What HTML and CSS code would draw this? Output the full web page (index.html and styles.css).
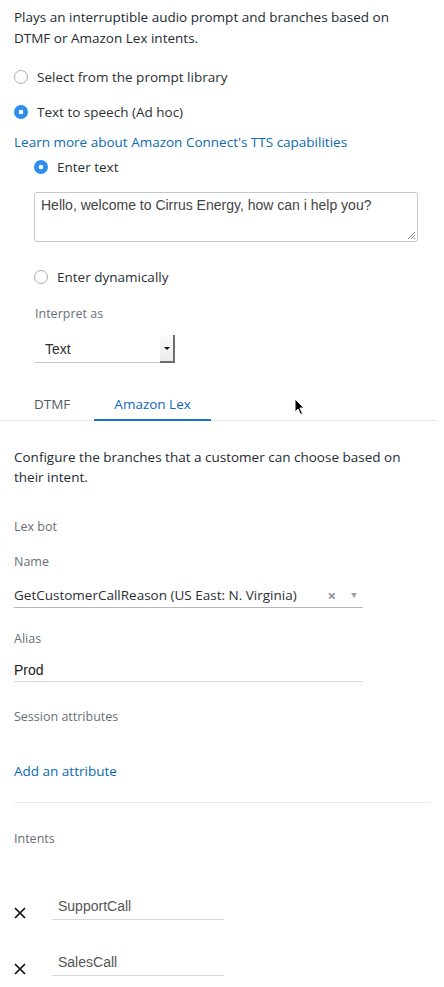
FILE: index.html
```html
<!DOCTYPE html>
<html lang="en">
<head>
<meta charset="utf-8">
<title>Get customer input</title>
<link rel="stylesheet" href="styles.css">
</head>
<body>
<main class="panel">
  <p class="desc">Plays an interruptible audio prompt and branches based on DTMF or Amazon Lex intents.</p>

  <div class="radio-row first"><span class="radio"></span><span>Select from the prompt library</span></div>
  <div class="radio-row second"><span class="radio checked"></span><span>Text to speech (Ad hoc)</span></div>

  <a class="link learn" href="#">Learn more about Amazon Connect's TTS capabilities</a>

  <div class="sub">
    <div class="radio-row enter-text"><span class="radio checked"></span><span>Enter text</span></div>
    <div class="textarea">Hello, welcome to Cirrus Energy, how can i help you?
      <svg class="grip" width="10" height="10" viewBox="0 0 10 10"><path d="M9 2 L2 9 M9 5 L5 9 M9 8 L8 9" stroke="#888" stroke-width="1"/></svg>
    </div>
    <div class="radio-row dyn"><span class="radio"></span><span>Enter dynamically</span></div>
    <div class="label interp">Interpret as</div>
    <div class="native-select">
      <span class="ns-value">Text</span>
      <span class="ns-btn"><span class="ns-tri"></span></span>
    </div>
  </div>

  <div class="tabs">
    <div class="tab">DTMF</div>
    <div class="tab active">Amazon Lex</div>
  </div>

  <p class="desc2">Configure the branches that a customer can choose based on their intent.</p>

  <div class="label lexbot">Lex bot</div>
  <div class="label name">Name</div>
  <div class="select">
    <span class="sel-value">GetCustomerCallReason (US East: N. Virginia)</span>
    <span class="sel-clear">&#215;</span>
    <span class="sel-arrow"></span>
  </div>

  <div class="label alias">Alias</div>
  <div class="field prod">Prod</div>

  <div class="label session">Session attributes</div>
  <a class="link add" href="#">Add an attribute</a>

  <hr class="sep">

  <div class="label intents">Intents</div>

  <div class="intent first-intent">
    <svg class="x" width="12" height="12" viewBox="0 0 12 12"><path d="M1 1 L11 11 M11 1 L1 11" stroke="#111" stroke-width="1.7"/></svg>
    <div class="intent-input">SupportCall</div>
  </div>
  <div class="intent second-intent">
    <svg class="x" width="12" height="12" viewBox="0 0 12 12"><path d="M1 1 L11 11 M11 1 L1 11" stroke="#111" stroke-width="1.7"/></svg>
    <div class="intent-input">SalesCall</div>
  </div>

  <svg class="cursor" width="12" height="18" viewBox="0 0 12 18"><path d="M1 1 L1 14 L4 11 L6.5 16.5 L8.5 15.5 L6 10 L10 10 Z" fill="#000" stroke="#fff" stroke-width="1"/></svg>
</main>
</body>
</html>
```

FILE: styles.css
```css
* { box-sizing: border-box; }
html, body { margin: 0; padding: 0; background: #fff; }
body {
  font-family: "Open Sans", "Noto Sans", sans-serif;
  font-size: 13.5px;
  color: #232b33;
}
.panel {
  position: relative;
  width: 437px;
  padding: 0 0 12px 14px;
  overflow: hidden;
}
p { margin: 0; }
.desc {
  padding-top: 6.5px;
  line-height: 21px;
  width: 410px;
}
.radio-row {
  display: flex;
  align-items: center;
  height: 21px;
  line-height: 21px;
  gap: 9px;
  color: #2a2f35;
}
.radio {
  width: 14px;
  height: 14px;
  border-radius: 50%;
  border: 1px solid #aab0b6;
  background: #fff;
  flex: none;
}
.radio.checked {
  border: none;
  background: radial-gradient(circle, #fff 0 2px, #2d8ef0 2.6px);
}
.radio-row.first { margin-top: 18px; }
.radio-row.second { margin-top: 14px; }
.link {
  display: block;
  color: #0a6bb1;
  text-decoration: none;
  line-height: 21px;
  height: 21px;
}
.learn { margin-top: 9px; }
.sub { padding-left: 20px; }
.enter-text { margin-top: 4px; }
.textarea {
  position: relative;
  margin-top: 14.5px;
  width: 384px;
  height: 50px;
  border: 1px solid #c6c9cc;
  border-radius: 3px;
  padding: 3px 6px;
  font-family: "Liberation Sans", Arial, sans-serif;
  font-size: 14px;
  line-height: 18px;
  color: #444;
}
.grip { position: absolute; right: 1px; bottom: 1px; }
.dyn { margin-top: 24.5px; }
.label {
  font-size: 12.5px;
  color: #687078;
  line-height: 21px;
  height: 21px;
}
.interp { margin-top: 15px; padding-left: 1px; }
.native-select {
  margin-top: 11.5px;
  margin-left: 1px;
  width: 140px;
  height: 28px;
  display: flex;
  align-items: stretch;
  border-bottom: 1px solid #c9c9c9;
}
.ns-value {
  flex: 1;
  padding-left: 10px;
  line-height: 28px;
  font-family: "Liberation Sans", Arial, sans-serif;
  font-size: 14px;
  color: #333;
}
.ns-btn {
  width: 15px;
  background: linear-gradient(#fafafa, #ececec);
  border-right: 2px solid #6c6c6c;
  border-bottom: 2px solid #6c6c6c;
  margin-bottom: -1px;
  display: flex;
  align-items: center;
  justify-content: center;
}
.ns-tri {
  width: 0; height: 0;
  border-left: 3px solid transparent;
  border-right: 3px solid transparent;
  border-top: 3px solid #111;
}
.tabs {
  margin-top: 30.5px;
  margin-left: -14px;
  padding-left: 14px;
  display: flex;
  gap: 4px;
  border-bottom: 1px solid #e4e6e8;
}
.tab {
  padding: 0 20px 4px;
  line-height: 21px;
  color: #545b64;
  border-bottom: 2px solid transparent;
  margin-bottom: -1px;
}
.tab.active {
  color: #1166bb;
  border-bottom-color: #1a6fdb;
}
.desc2 {
  margin-top: 26px;
  line-height: 20px;
  width: 416px;
}
.lexbot { margin-top: 29.5px; }
.name { margin-top: 14px; }
.select {
  margin-top: 11.5px;
  width: 349px;
  height: 24px;
  display: flex;
  align-items: center;
  border-bottom: 1px solid #b4b8bc;
  line-height: 21px;
}
.sel-value { flex: 1; color: #2a2f35; }
.sel-clear {
  color: #8d9196;
  font-size: 15px;
  font-weight: bold;
  margin-right: 15px;
  line-height: 1;
}
.sel-arrow {
  width: 0; height: 0;
  border-left: 3.5px solid transparent;
  border-right: 3.5px solid transparent;
  border-top: 5px solid #9ea2a6;
  margin-right: 6px;
}
.alias { margin-top: 20.5px; }
.field {
  margin-top: 10.5px;
  width: 349px;
  height: 22px;
  line-height: 21px;
  border-bottom: 1px solid #d6d8da;
  font-family: "Liberation Sans", Arial, sans-serif;
  font-size: 14px;
  color: #1a1a1a;
}
.session { margin-top: 24.5px; }
.add { margin-top: 34px; font-weight: 500; }
.sep {
  margin: 19.5px 0 0;
  width: 416px;
  border: 0;
  border-top: 1px solid #e8eaec;
  height: 0;
}
.intents { margin-top: 25.5px; }
.intent {
  display: flex;
  align-items: flex-end;
  gap: 26px;
}
.first-intent { margin-top: 46px; }
.second-intent { margin-top: 31px; }
.x { flex: none; margin-bottom: 1.5px; }
.intent-input {
  width: 172px;
  height: 25px;
  line-height: 23px;
  padding-left: 6px;
  border-bottom: 1px solid #d6d8da;
  font-family: "Liberation Sans", Arial, sans-serif;
  font-size: 14px;
  color: #555;
}
.cursor {
  position: absolute;
  left: 294px;
  top: 398px;
}
```
